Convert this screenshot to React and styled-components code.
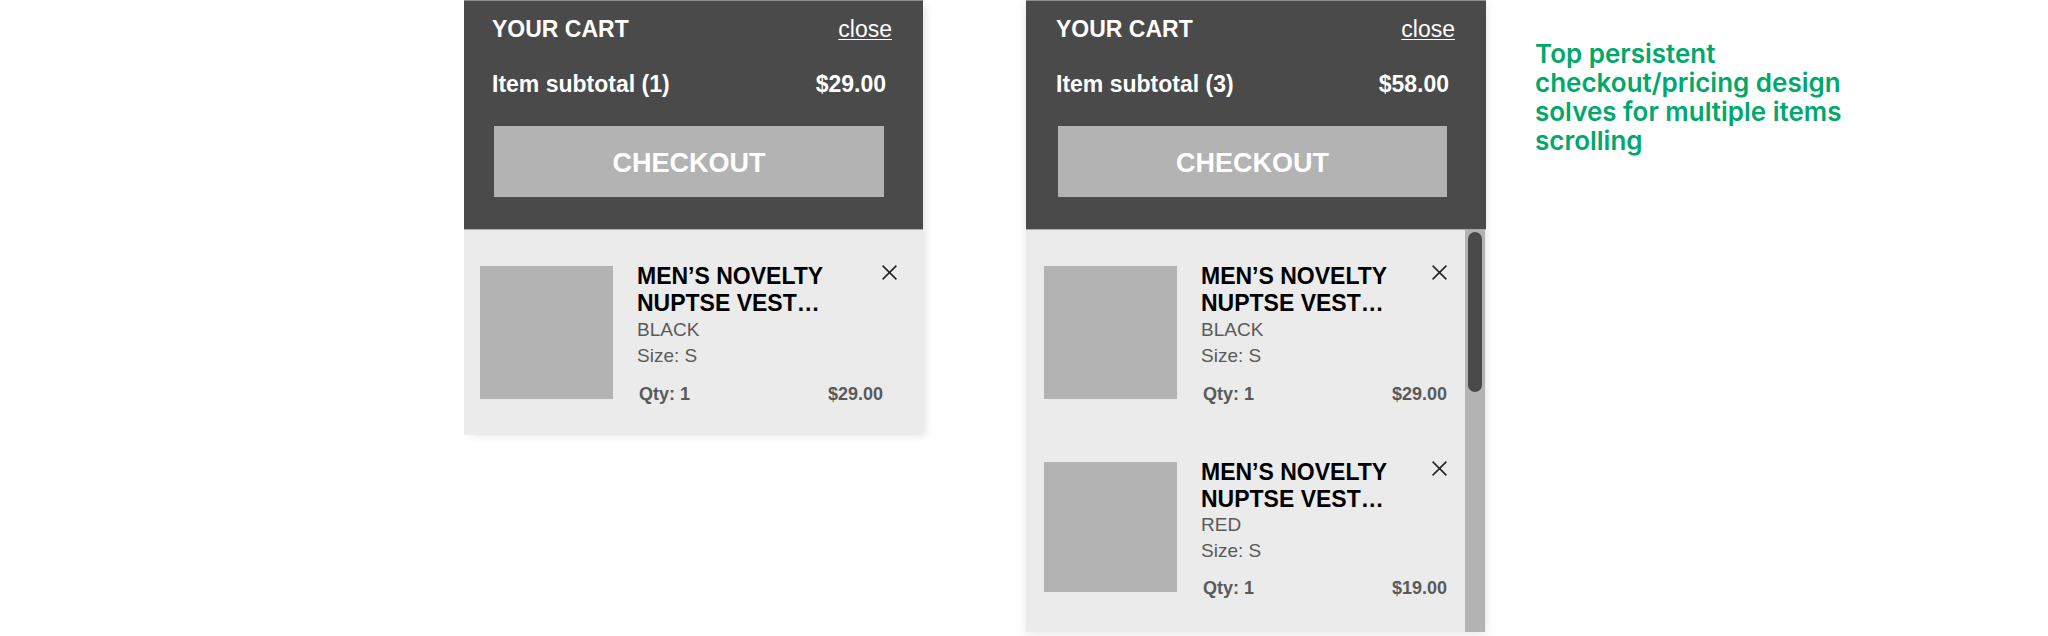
import React from "react";
import styled, { createGlobalStyle } from "styled-components";

const GlobalStyle = createGlobalStyle`
  * { box-sizing: border-box; }
  body {
    margin: 0;
    background: #fff;
    font-family: "Liberation Sans", Arial, sans-serif;
  }
  h2, h3, p, ul { margin: 0; padding: 0; }
  ul { list-style: none; }
  button {
    border: 0;
    padding: 0;
    background: none;
    font-family: inherit;
    cursor: pointer;
  }
`;

const Board = styled.main`
  display: grid;
  grid-template-columns: 464fr 459fr 103fr 460fr 49fr 513fr;
  align-items: start;
  padding-bottom: 4px;
`;

const Panel = styled.section`
  grid-column: ${(p) => p.$column};
  box-shadow: ${(p) => (p.$column === 2 ? "5px 3px 8px -2px" : "0 2px 10px")} rgba(0, 0, 0, 0.1);
`;

const Header = styled.header`
  display: flex;
  flex-direction: column;
  gap: 28px;
  padding: 15px 39px 32px ${(p) => p.$inset}px;
  background: #4a4a4a;
  border-top: 1px solid #8e8e8e;
  border-bottom: 1px solid #a8a8a8;
  color: #fff;
  font-size: 23px;
  line-height: 27px;
`;

const HeaderRow = styled.div`
  display: flex;
  justify-content: space-between;
  margin-left: -2px;
  margin-right: ${(p) => (p.$wide ? "-8px" : "-2px")};
  font-weight: bold;
`;

const Heading = styled.h2`
  font-size: 23px;
  line-height: 27px;
`;

const CloseButton = styled.button`
  color: #fff;
  font-size: 23px;
  line-height: 27px;
  text-decoration: underline;
  text-decoration-thickness: 1px;
  text-underline-offset: 2px;
`;

const CheckoutButton = styled.button`
  height: 71px;
  padding-top: 2px;
  background: #b3b3b3;
  color: #fff;
  font-size: 27px;
  font-weight: bold;
  line-height: 32px;
`;

const Body = styled.div`
  display: flex;
  background: #ebebeb;
`;

const ItemList = styled.ul`
  flex: 1;
  display: flex;
  flex-direction: column;
  gap: 52px;
  padding: 33px ${(p) => (p.$scroll ? "18px 31px 18px" : "26px 28px 16px")};
`;

const Item = styled.li`
  display: flex;
  gap: 24px;
`;

const Thumbnail = styled.div`
  flex: none;
  width: 133px;
  height: ${(p) => (p.$compact ? 130 : 133)}px;
  margin-top: 3px;
  background: #b3b3b3;
`;

const Details = styled.div`
  flex: 1;
`;

const TitleRow = styled.div`
  display: flex;
  justify-content: space-between;
  align-items: flex-start;
`;

const ItemTitle = styled.h3`
  color: #000;
  font-size: 23px;
  line-height: 27px;
`;

const RemoveButton = styled.button`
  display: flex;
  padding-top: 2px;
`;

const Meta = styled.div`
  margin-top: ${(p) => (p.$compact ? "-1px" : "0")};
  color: #5a5a5a;
  font-size: 19px;
  line-height: 26px;
`;

const PriceRow = styled.div`
  display: flex;
  justify-content: space-between;
  margin-top: ${(p) => (p.$compact ? 11 : 12)}px;
  padding-left: 2px;
  padding-right: ${(p) => (p.$scroll ? 0 : 14)}px;
  color: #5a5a5a;
  font-size: 18px;
  font-weight: bold;
  line-height: 26px;
`;

const ScrollTrack = styled.div`
  flex: none;
  width: 20px;
  margin-right: 1px;
  padding: 2px 3px;
  background: #b3b3b3;
`;

const ScrollThumb = styled.div`
  height: 160px;
  border-radius: 7px;
  background: #4a4a4a;
`;

const Note = styled.p`
  grid-column: 6;
  max-width: 340px;
  padding-top: 39px;
  color: #00a86b;
  font-family: Inter, "Open Sans", sans-serif;
  font-size: 26px;
  font-weight: 600;
  line-height: 29px;
`;

function CrossIcon() {
  return (
    <svg width="15" height="15" viewBox="0 0 15 15" aria-hidden="true">
      <path d="M0.6 0.6L14.4 14.4M14.4 0.6L0.6 14.4" stroke="#222" strokeWidth="1.5" fill="none" />
    </svg>
  );
}

function CartItem({ color, price, compact, scroll }) {
  return (
    <Item>
      <Thumbnail $compact={compact} />
      <Details>
        <TitleRow>
          <ItemTitle>
            MEN’S NOVELTY
            <br />
            NUPTSE VEST…
          </ItemTitle>
          <RemoveButton type="button" aria-label="Remove item">
            <CrossIcon />
          </RemoveButton>
        </TitleRow>
        <Meta $compact={compact}>
          <p>{color}</p>
          <p>Size: S</p>
        </Meta>
        <PriceRow $compact={compact} $scroll={scroll}>
          <span>Qty: 1</span>
          <span>{price}</span>
        </PriceRow>
      </Details>
    </Item>
  );
}

function Cart({ column, inset, count, subtotal, items, scroll }) {
  return (
    <Panel $column={column}>
      <Header $inset={inset}>
        <HeaderRow $wide>
          <Heading>YOUR CART</Heading>
          <CloseButton type="button">close</CloseButton>
        </HeaderRow>
        <HeaderRow>
          <span>Item subtotal ({count})</span>
          <span>{subtotal}</span>
        </HeaderRow>
        <CheckoutButton type="button">CHECKOUT</CheckoutButton>
      </Header>
      <Body>
        <ItemList $scroll={scroll}>
          {items.map((item) => (
            <CartItem key={item.color} scroll={scroll} {...item} />
          ))}
        </ItemList>
        {scroll && (
          <ScrollTrack aria-hidden="true">
            <ScrollThumb />
          </ScrollTrack>
        )}
      </Body>
    </Panel>
  );
}

export default function App() {
  return (
    <>
      <GlobalStyle />
      <Board>
        <Cart
          column={2}
          inset={30}
          count={1}
          subtotal="$29.00"
          items={[{ color: "BLACK", price: "$29.00" }]}
        />
        <Cart
          column={4}
          inset={32}
          count={3}
          subtotal="$58.00"
          scroll
          items={[
            { color: "BLACK", price: "$29.00" },
            { color: "RED", price: "$19.00", compact: true },
          ]}
        />
        <Note>Top persistent checkout/pricing design solves for multiple items scrolling</Note>
      </Board>
    </>
  );
}
